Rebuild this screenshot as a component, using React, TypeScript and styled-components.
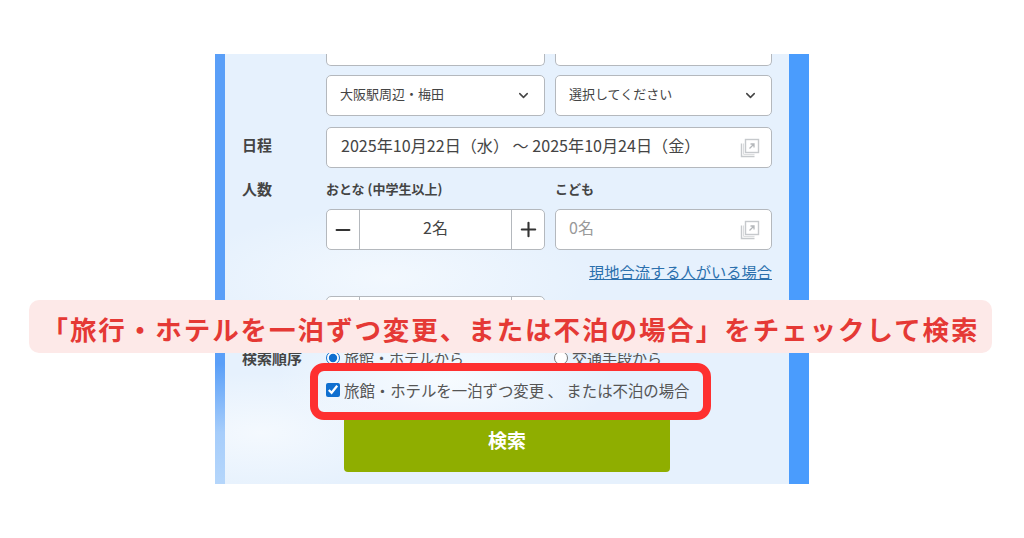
import React from "react";
import styled, { createGlobalStyle } from "styled-components";
import { ChevronDown, Minus, Plus } from "lucide-react";

const GlobalStyle = createGlobalStyle`
	html, body {
		margin: 0;
		padding: 0;
		background: #fff;
		font-family: "Noto Sans CJK JP", "Noto Sans", sans-serif;
		color: #333;
	}
`;

const CopyIcon = () => (
	<svg width="20" height="20" viewBox="0 0 20 20" fill="none">
		<rect x="5.5" y="1.5" width="13" height="13" stroke="#c6c9cc" strokeWidth="1.4" />
		<path d="M1.5 5.5V18.5H14.5" stroke="#c6c9cc" strokeWidth="1.4" />
		<path d="M3.6 5.5V16.4H14.5" stroke="#d8dadc" strokeWidth="1" />
		<path d="M9.5 10.5L14 6M10.5 6H14V9.5" stroke="#b4b7ba" strokeWidth="1.3" />
	</svg>
);

const App = () => (
	<Page>
		<GlobalStyle />
		<Panel>
			<Content>
				<FieldGrid>
					<ClippedField />
					<ClippedField />
				</FieldGrid>
				<FieldGrid>
					<SelectBox>
						<FieldText>大阪駅周辺・梅田</FieldText>
						<ChevronDown size={15} strokeWidth={2.4} color="#444" />
					</SelectBox>
					<SelectBox>
						<FieldText>選択してください</FieldText>
						<ChevronDown size={15} strokeWidth={2.4} color="#444" />
					</SelectBox>
				</FieldGrid>
				<DateRow>
					<DateLabel>日程</DateLabel>
					<DateBox>
						<FieldText>2025年10月22日（水） ～ 2025年10月24日（金）</FieldText>
						<CopyIcon />
					</DateBox>
				</DateRow>
				<PeopleRow>
					<RowLabel>人数</RowLabel>
					<SubLabel>おとな (中学生以上)</SubLabel>
					<SubLabel>こども</SubLabel>
				</PeopleRow>
				<FieldGrid>
					<Stepper>
						<StepButton><Minus size={22} strokeWidth={2.2} /></StepButton>
						<StepValue>2名</StepValue>
						<StepButton><Plus size={23} strokeWidth={2.2} /></StepButton>
					</Stepper>
					<ChildBox>
						<FieldText>0名</FieldText>
						<CopyIcon />
					</ChildBox>
				</FieldGrid>
				<LinkRow>
					<JoinLink href="#">現地合流する人がいる場合</JoinLink>
				</LinkRow>
				<FieldGrid>
					<Stepper>
						<StepButton><Minus size={22} strokeWidth={2.2} /></StepButton>
						<StepValue />
						<StepButton><Plus size={23} strokeWidth={2.2} /></StepButton>
					</Stepper>
				</FieldGrid>
				<OrderRow>
					<OrderLabel>検索順序</OrderLabel>
					<OrderOption>
						<Radio type="radio" name="order" defaultChecked />
						旅館・ホテルから
					</OrderOption>
					<OrderOption>
						<Radio type="radio" name="order" />
						交通手段から
					</OrderOption>
				</OrderRow>
				<CheckRow>
					<Check type="checkbox" defaultChecked />
					旅館・ホテルを一泊ずつ変更 、 または不泊の場合
				</CheckRow>
				<SearchButton>検索</SearchButton>
			</Content>
		</Panel>
		<Banner>「旅行・ホテルを一泊ずつ変更、または不泊の場合」をチェックして検索</Banner>
		<Highlight />
	</Page>
);

export default App;

const Page = styled.div`
	position: relative;
	width: 1024px;
	height: 538px;
	padding: 54px 0 0 215px;
	box-sizing: border-box;
	overflow: hidden;
`;

const Panel = styled.div`
	width: 594px;
	height: 430px;
	display: flex;
	overflow: hidden;
	border-right: 20px solid #4a9cfd;
	box-sizing: border-box;
	background: linear-gradient(#5a9ff8, #5a9ff8 72%, #a6cdfb 88%, #b5d6fb) left / 10px 100% no-repeat,
		radial-gradient(ellipse 170px 60px at 40% 76%, #f7fbff, transparent),
		radial-gradient(ellipse 150px 60px at 8% 88%, #f4f9fe, transparent),
		radial-gradient(ellipse 200px 70px at 30% 52%, #f2f8fe, transparent),
		#e6f1fd;
`;

const Content = styled.div`
	flex: 1;
	padding-left: 27px;
	padding-right: 17px;
	display: flex;
	flex-direction: column;
`;

const FieldGrid = styled.div`
	display: grid;
	grid-template-columns: 219px 217px;
	column-gap: 10px;
	margin-left: 84px;
`;

const fieldBox = `
	box-sizing: border-box;
	height: 41px;
	display: flex;
	align-items: center;
	justify-content: space-between;
	background: #fff;
	border: 1px solid #b4b8bd;
	border-radius: 5px;
`;

const ClippedField = styled.div`
	box-sizing: border-box;
	height: 12px;
	background: #fff;
	border: 1px solid #b4b8bd;
	border-top: none;
	border-radius: 0 0 5px 5px;
	margin-bottom: 9px;
`;

const FieldText = styled.span`
	margin-bottom: 5px;
	white-space: pre;
`;

const SelectBox = styled.div`
	${fieldBox}
	padding: 0 13px 0 13px;
	font-size: 13px;
	color: #444;
`;

const DateRow = styled.div`
	display: flex;
	align-items: center;
	margin-top: 11px;
`;

const RowLabel = styled.div`
	width: 84px;
	font-size: 15px;
	font-weight: 700;
	color: #444;
`;

const DateLabel = styled(RowLabel)`
	padding-bottom: 6px;
`;

const DateBox = styled.div`
	${fieldBox}
	width: 446px;
	padding: 0 11px 0 14px;
	font-size: 16.1px;
	color: #444;
`;

const PeopleRow = styled.div`
	display: grid;
	grid-template-columns: 84px 219px 217px;
	align-items: center;
	height: 22px;
	margin-top: 9px;
	margin-bottom: 10px;
	& > :last-child {
		margin-left: 10px;
	}
`;

const SubLabel = styled.div`
	font-size: 13px;
	font-weight: 700;
	color: #444;
	white-space: nowrap;
`;

const Stepper = styled.div`
	${fieldBox}
	overflow: hidden;
`;

const StepButton = styled.div`
	width: 32px;
	height: 100%;
	flex: none;
	display: flex;
	align-items: center;
	justify-content: center;
	color: #333;
	&:first-child {
		border-right: 1px solid #b4b8bd;
	}
	&:last-child {
		border-left: 1px solid #b4b8bd;
	}
`;

const StepValue = styled.div`
	flex: 1;
	text-align: center;
	font-size: 16px;
	color: #444;
	margin-bottom: 5px;
`;

const ChildBox = styled.div`
	${fieldBox}
	padding: 0 11px 0 13px;
	font-size: 16px;
	color: #999;
`;

const LinkRow = styled.div`
	display: flex;
	justify-content: flex-end;
	align-items: center;
	height: 22px;
	margin-top: 10px;
	margin-bottom: 14px;
`;

const JoinLink = styled.a`
	font-size: 15.25px;
	color: #2b70ad;
	text-decoration: underline;
	white-space: nowrap;
`;

const OrderRow = styled.div`
	display: grid;
	grid-template-columns: 84px 228px 218px;
	align-items: center;
	height: 20px;
	margin-top: 10px;
`;

const OrderLabel = styled.div`
	font-size: 15px;
	font-weight: 700;
	color: #444;
`;

const OrderOption = styled.label`
	display: flex;
	align-items: center;
	gap: 4px;
	font-size: 15px;
	color: #555;
	white-space: nowrap;
`;

const Radio = styled.input`
	margin: 0;
	width: 14px;
	height: 14px;
	accent-color: #0f6fd0;
`;

const CheckRow = styled.label`
	display: flex;
	align-items: center;
	gap: 4px;
	height: 24px;
	margin-top: 11px;
	margin-left: 84px;
	font-size: 15.4px;
	color: #555;
	white-space: nowrap;
`;

const Check = styled.input`
	margin: 0;
	width: 14px;
	height: 14px;
	flex: none;
	accent-color: #0f6fd0;
`;

const SearchButton = styled.button`
	width: 326px;
	height: 60px;
	margin-top: 10px;
	margin-left: 102px;
	padding: 0 0 6px;
	border: none;
	border-radius: 4px;
	background: #8fae00;
	color: #fff;
	font-family: inherit;
	font-size: 19px;
	font-weight: 700;
`;

const Banner = styled.div`
	position: absolute;
	left: 29px;
	top: 300px;
	width: 963px;
	height: 53px;
	box-sizing: border-box;
	padding-top: 3px;
	display: flex;
	align-items: center;
	justify-content: center;
	border-radius: 10px;
	background: #fde9e8;
	color: #e53935;
	font-size: 26.5px;
	letter-spacing: 1.95px;
	font-weight: 700;
	white-space: nowrap;
`;

const Highlight = styled.div`
	position: absolute;
	left: 310px;
	top: 363px;
	width: 401px;
	height: 57px;
	box-sizing: border-box;
	border: 8px solid #fe3030;
	border-radius: 14px;
`;
